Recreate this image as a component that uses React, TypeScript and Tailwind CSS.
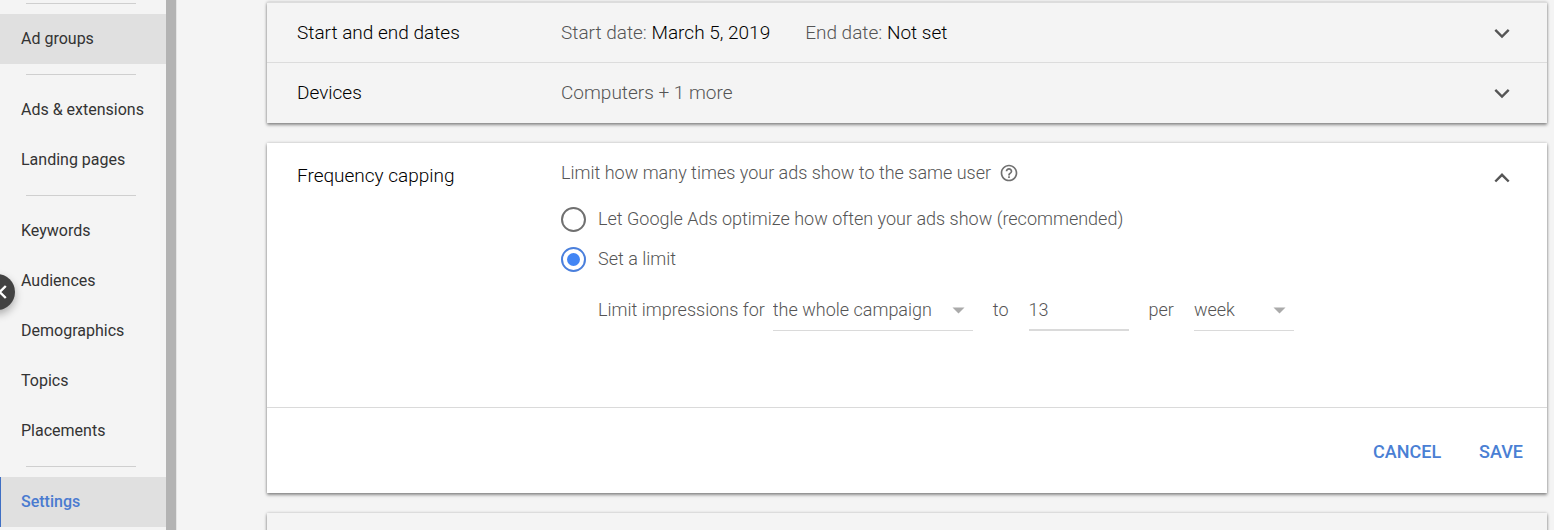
import { useState } from 'react';
import type { ReactNode } from 'react';

const navGroups = [
    ['Ad groups'],
    ['Ads & extensions', 'Landing pages'],
    ['Keywords', 'Audiences', 'Demographics', 'Topics', 'Placements'],
    ['Settings'],
];

const cardClass = 'shadow-[0_2px_3px_rgba(0,0,0,0.4),0_0_3px_rgba(0,0,0,0.2)]';

function NavItem({ label }: { label: string }) {
    const base = 'flex h-[50px] items-center pl-5 text-base';
    if (label === 'Settings') {
        return (
            <a href="#settings" aria-current="page" className={`${base} border-l border-[#3f6fc4] bg-[#e0e0e0] font-medium text-[#4a7bd0]`}>
                {label}
            </a>
        );
    }
    return (
        <a href="#" className={`${base} border-l border-transparent text-[#333] ${label === 'Ad groups' ? 'bg-[#e0e0e0]' : ''}`}>
            {label}
        </a>
    );
}

function Sidebar() {
    return (
        <nav className="w-[166px] shrink-0 pt-[3px]">
            {navGroups.map((group) => (
                <div key={group[0]} className="pb-2.5">
                    <hr className="mr-[30px] mb-2.5 ml-[26px] border-[#cfcfcf]" />
                    {group.map((label) => (
                        <NavItem key={label} label={label} />
                    ))}
                </div>
            ))}
        </nav>
    );
}

function Chevron({ up = false }: { up?: boolean }) {
    return (
        <svg width="24" height="24" viewBox="0 0 24 24" fill="none" stroke="#555" strokeWidth="2.4" aria-hidden="true">
            <path d={up ? 'M5.3 15.5 12 8.8l6.7 6.7' : 'M5.3 8.8 12 15.5l6.7-6.7'} />
        </svg>
    );
}

function SettingRow({ title, children }: { title: string; children: ReactNode }) {
    return (
        <button type="button" className="flex h-15 w-full items-center border-t border-[#dcdcdc] pr-[33px] pl-[30px] text-left text-[19px]">
            <span className="w-[264px] shrink-0 text-black">{title}</span>
            <span className="flex flex-1 gap-[35px] text-[#555]">{children}</span>
            <Chevron />
        </button>
    );
}

interface RadioOptionProps {
    label: string;
    checked: boolean;
    onSelect: () => void;
}

function RadioOption({ label, checked, onSelect }: RadioOptionProps) {
    return (
        <label className="flex h-10 items-center gap-3">
            <input
                type="radio"
                name="frequency"
                checked={checked}
                onChange={onSelect}
                className="size-[25px] appearance-none rounded-full border-2 border-[#707070] p-1 checked:border-[#4a7fdc] checked:bg-[#4285f4] checked:bg-clip-content"
            />
            {label}
        </label>
    );
}

function Dropdown({ label, options, className }: { label: string; options: string[]; className: string }) {
    return (
        <div className={`relative ${className}`}>
            <select aria-label={label} className="h-[42px] w-full appearance-none border-b border-[#dadada] outline-none">
                {options.map((option) => (
                    <option key={option}>{option}</option>
                ))}
            </select>
            <svg className="pointer-events-none absolute top-[18px] right-2" width="13" height="7" viewBox="0 0 13 7" aria-hidden="true">
                <path d="M0.5 0.5h12l-6 6z" fill="#aaa" />
            </svg>
        </div>
    );
}

function HelpIcon() {
    return (
        <svg width="20" height="20" viewBox="0 0 24 24" fill="#707070" aria-hidden="true">
            <path d="M11 18h2v-2h-2v2zm1-16C6.48 2 2 6.48 2 12s4.48 10 10 10 10-4.48 10-10S17.52 2 12 2zm0 18c-4.41 0-8-3.59-8-8s3.59-8 8-8 8 3.59 8 8-3.59 8-8 8zm0-14c-2.21 0-4 1.79-4 4h2c0-1.1.9-2 2-2s2 .9 2 2c0 2-3 1.75-3 5h2c0-2.25 3-2.5 3-5 0-2.21-1.79-4-4-4z" />
        </svg>
    );
}

function FrequencyCapping() {
    const [mode, setMode] = useState('limit');
    const [count, setCount] = useState('13');

    return (
        <section className={`bg-white ${cardClass}`}>
            <div className="flex min-h-[264px] items-start pt-4 pr-[33px] pl-[30px]">
                <h2 className="w-[264px] shrink-0 pt-0.5 text-[19px] font-light text-black">Frequency capping</h2>
                <div className="flex-1 font-light text-[#555]">
                    <div className="flex items-center gap-2">
                        Limit how many times your ads show to the same user
                        <button type="button" aria-label="Help">
                            <HelpIcon />
                        </button>
                    </div>
                    <div className="pt-3">
                        <RadioOption
                            label="Let Google Ads optimize how often your ads show (recommended)"
                            checked={mode === 'auto'}
                            onSelect={() => setMode('auto')}
                        />
                        <RadioOption label="Set a limit" checked={mode === 'limit'} onSelect={() => setMode('limit')} />
                    </div>
                    <div className="flex items-center pt-2.5 pl-[37px]">
                        <span className="pr-2">Limit impressions for</span>
                        <Dropdown label="Limit impressions for" options={['the whole campaign', 'each ad group', 'each ad']} className="w-[200px]" />
                        <span className="px-5">to</span>
                        <input
                            type="text"
                            aria-label="Impressions"
                            value={count}
                            onChange={(e) => setCount(e.target.value)}
                            className="h-[42px] w-[100px] border-b-2 border-[#dadada] outline-none"
                        />
                        <span className="px-5">per</span>
                        <Dropdown label="Per" options={['week', 'day', 'month']} className="w-[100px]" />
                    </div>
                </div>
                <button type="button" aria-label="Collapse" className="pt-[7px]">
                    <Chevron up />
                </button>
            </div>
            <div className="flex h-[86px] items-center justify-end gap-[38px] border-t border-[#dadada] pt-0.5 pr-6 font-medium text-[#4a7fd4]">
                <button type="button">CANCEL</button>
                <button type="button">SAVE</button>
            </div>
        </section>
    );
}

export default function App() {
    return (
        <div className="flex h-screen overflow-hidden bg-[#f4f4f4] font-['Roboto',sans-serif]">
            <div className="relative flex shrink-0">
                <Sidebar />
                <div className="w-2.5 bg-[#b3b3b3]" />
                <button
                    type="button"
                    aria-label="Collapse menu"
                    className="absolute top-[274px] -left-[21px] flex size-9 items-center justify-end rounded-full bg-[#424242] pr-2 shadow-[0_4px_8px_rgba(0,0,0,0.3)]"
                >
                    <svg width="9" height="14" viewBox="0 0 9 14" fill="none" stroke="#fff" strokeWidth="2.4" aria-hidden="true">
                        <path d="M7.8 1 1.8 7l6 6" />
                    </svg>
                </button>
            </div>
            <main className="flex min-w-0 flex-1 flex-col gap-5 border-l border-[#e4e4e4] pt-0.5 pr-[7px] pl-[90px] text-lg">
                <section className={`shrink-0 pb-px font-light ${cardClass}`}>
                    <SettingRow title="Start and end dates">
                        <span>
                            Start date: <span className="text-black">March 5, 2019</span>
                        </span>
                        <span>
                            End date: <span className="text-black">Not set</span>
                        </span>
                    </SettingRow>
                    <SettingRow title="Devices">
                        <span>Computers + 1 more</span>
                    </SettingRow>
                </section>
                <FrequencyCapping />
                <section className={`h-15 shrink-0 bg-[#f4f4f4] ${cardClass}`} />
            </main>
        </div>
    );
}
